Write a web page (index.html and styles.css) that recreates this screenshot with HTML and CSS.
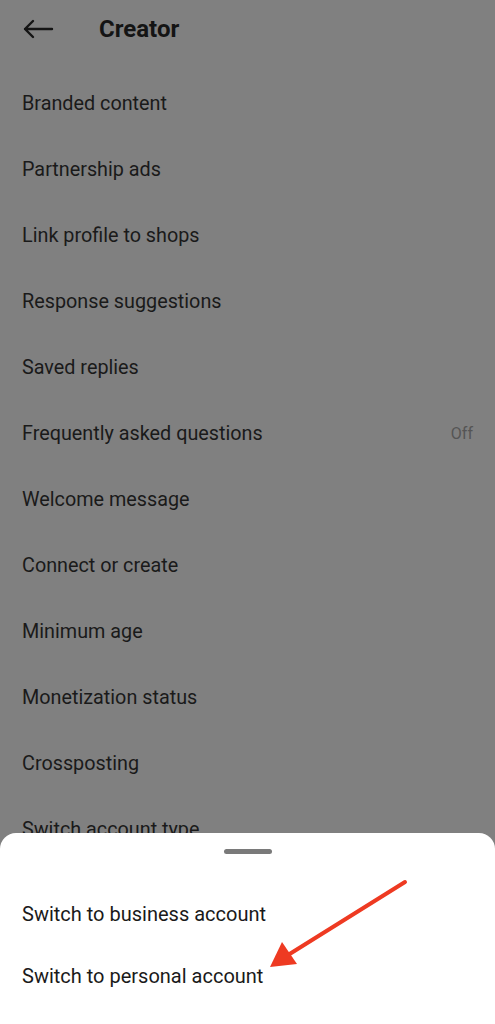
FILE: index.html
```html
<!DOCTYPE html>
<html lang="en">
<head>
    <meta charset="UTF-8">
    <meta name="viewport" content="width=device-width, initial-scale=1.0">
    <title>Creator</title>
    <link rel="stylesheet" href="styles.css">
</head>
<body>

<div class="header">
    <svg class="back" width="32" height="20" viewBox="0 0 32 20">
        <path d="M30 10 H3 M11 2 L3 10 L11 18" fill="none" stroke="#141414" stroke-width="2.4" stroke-linecap="round" stroke-linejoin="round"/>
    </svg>
    <h1 class="title">Creator</h1>
</div>

<ul class="menu">
    <li>Branded content</li>
    <li>Partnership ads</li>
    <li>Link profile to shops</li>
    <li>Response suggestions</li>
    <li>Saved replies</li>
    <li>Frequently asked questions <span class="state">Off</span></li>
    <li>Welcome message</li>
    <li>Connect or create</li>
    <li>Minimum age</li>
    <li>Monetization status</li>
    <li>Crossposting</li>
    <li>Switch account type</li>
</ul>

<!-- bottom sheet over the dimmed page -->
<div class="sheet">
    <div class="handle"></div>
    <div class="sheet-list">
        <div class="sheet-item">Switch to business account</div>
        <div class="sheet-item">Switch to personal account</div>
    </div>
</div>

<svg class="pointer" width="495" height="1024" viewBox="0 0 495 1024">
    <line x1="405" y1="882" x2="288" y2="955" stroke="#ee3a22" stroke-width="4" stroke-linecap="round"/>
    <polygon points="270,967 282,942 297,964" fill="#ee3a22"/>
</svg>

</body>
</html>
```

FILE: styles.css
```css
body {
    font-family: Roboto, "Noto Sans", sans-serif;
    background-color: #808080;
    color: #1a1a1a;
    margin: 0;
    height: 1024px;
    overflow: hidden;
    position: relative;
}
.header {
    display: flex;
    align-items: center;
    height: 58px;
    padding-left: 22px;
}
.back {
    display: block;
}
.title {
    font-size: 24px;
    font-weight: bold;
    margin: 0 0 0 45px;
    color: #141414;
}
.menu {
    list-style: none;
    margin: 0;
    padding: 12px 0 0 0;
}
.menu li {
    display: flex;
    align-items: center;
    justify-content: space-between;
    height: 66px;
    padding: 0 22px;
    font-size: 19.8px;
}
.state {
    font-size: 16px;
    color: #555;
}
.sheet {
    position: absolute;
    left: 0;
    right: 0;
    top: 833px;
    bottom: 0;
    background-color: #fff;
    border-radius: 16px 16px 0 0;
}
.handle {
    width: 48px;
    height: 5px;
    border-radius: 3px;
    background-color: #7a7a7a;
    margin: 16px auto 0;
}
.sheet-list {
    padding-top: 29px;
}
.sheet-item {
    display: flex;
    align-items: center;
    height: 62px;
    padding: 0 22px;
    font-size: 20px;
    color: #1a1a1a;
}
.pointer {
    position: absolute;
    left: 0;
    top: 0;
}
```
